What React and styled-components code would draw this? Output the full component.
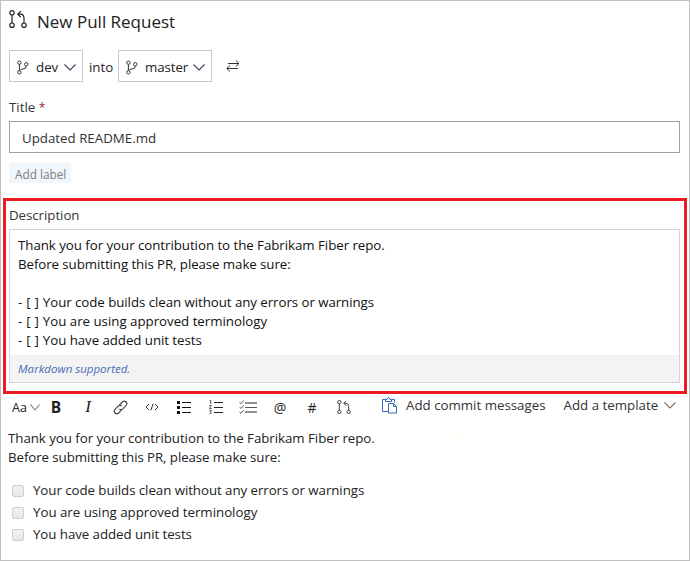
import React from "react";
import styled, { createGlobalStyle } from "styled-components";

const Global = createGlobalStyle`
  * { box-sizing: border-box; }
  html, body { margin: 0; background: #fff; }
  body { font-family: "Open Sans", "Noto Sans", sans-serif; font-size: 13.3px; color: #333; overflow: hidden; }
  h1, p, ul { margin: 0; padding: 0; font-weight: 400; }
  svg { display: block; flex: none; overflow: visible; }
`;

const Page = styled.main`
  width: 690px;
  height: 561px;
  border: 1px solid #c0c0c0;
  display: flex;
  flex-direction: column;
  position: relative;
`;
const Text = styled.span`
  white-space: pre;
  letter-spacing: ${(p) => p.$track || 0}px;
  margin-left: ${(p) => p.$left || 0}px;
`;
const Header = styled.header`
  display: flex;
  align-items: center;
  height: 40px;
  padding: 0 0 0 8px;
`;
const HeaderIcon = styled.span`
  margin-bottom: 4px;
`;
const Heading = styled.h1`
  font-size: 17px;
  line-height: 24px;
  margin-left: 10px;
  padding-top: 1px;
  white-space: nowrap;
  color: #222;
`;
const Branches = styled.div`
  display: flex;
  align-items: center;
  height: 32px;
  margin: 9px 0 0 8px;
  color: #222;
`;
const BranchButton = styled.button`
  display: flex;
  align-items: center;
  width: ${(p) => p.$width}px;
  height: 32px;
  padding: 2px 6px 0 7px;
  border: 1px solid #c8c8c8;
  background: #fff;
  font: inherit;
  color: inherit;
  & > svg:last-child { margin-left: auto; }
`;
const Into = styled.span`
  width: 35px;
  padding: 1px 0 0 6px;
`;
const Swap = styled.span`
  margin-left: 14px;
`;
const FieldLabel = styled.label`
  display: block;
  height: 20px;
  line-height: 20px;
  margin: ${(p) => p.$margin};
`;
const Required = styled.span`
  color: #a02038;
  font-size: 12px;
`;
const TitleInput = styled.div`
  margin: 4px 9px 0 8px;
  height: 32px;
  border: 1px solid #a0a0a0;
  padding-left: 12px;
  line-height: 32px;
`;
const LabelChip = styled.button`
  margin: 10px 0 0 8px;
  width: 62px;
  height: 20px;
  padding: 1px 0 0 6px;
  border: 0;
  background: #eff6fc;
  color: #808080;
  font: inherit;
  font-size: 11.8px;
  line-height: 20px;
  text-align: left;
`;
const Highlight = styled.section`
  margin: 15px 2px 0 2px;
  height: 196px;
  border: 3px solid #ed1c24;
`;
const Editor = styled.div`
  margin: 4px 4px 0 3px;
  height: 154px;
  border: 1px solid #d4d4d4;
  display: flex;
  flex-direction: column;
`;
const EditorBody = styled.div`
  flex: 1;
  padding: 6px 0 0 8px;
  color: #111;
`;
const Line = styled.p`
  height: 19px;
  line-height: 19px;
  white-space: pre;
  letter-spacing: ${(p) => p.$track || 0}px;
`;
const EditorFooter = styled.div`
  height: 27px;
  background: #f3f3f3;
  color: #4a6db5;
  font-size: 11.5px;
  font-style: italic;
  line-height: 27px;
  padding-left: 8px;
`;
const Toolbar = styled.div`
  display: flex;
  align-items: center;
  height: 26px;
`;
const Tool = styled.span`
  display: flex;
  align-items: center;
  justify-content: center;
  width: 32px;
  height: 26px;
  color: #222;
  font-size: 14px;
`;
const StyleTool = styled(Tool)`
  width: 28px;
  margin-left: 11px;
  justify-content: space-between;
  font-size: 12.5px;
`;
const BoldTool = styled(Tool)`
  font-weight: 700;
  font-size: 15.5px;
  padding-bottom: 1px;
`;
const ItalicTool = styled(Tool)`
  font-family: "Liberation Serif", serif;
  font-style: italic;
  font-size: 17px;
`;
const Action = styled.span`
  display: flex;
  align-items: center;
  height: 22px;
  margin: 0 0 4px ${(p) => p.$left}px;
  gap: ${(p) => p.$gap}px;
`;
const Preview = styled.div`
  padding: 9px 0 0 7px;
  color: #222;
`;
const Tasks = styled.ul`
  list-style: none;
  margin-top: 12px;
`;
const Task = styled.li`
  display: flex;
  align-items: center;
  height: 22px;
  line-height: 22px;
`;
const Box = styled.span`
  width: 12px;
  height: 12px;
  margin: 2px 9px 0 4px;
  border: 1px solid #cfcfcf;
  border-radius: 2px;
  background: linear-gradient(#f2f2f2, #e6e6e6);
`;
const Mark = styled.i`
  position: absolute;
  left: 455px;
  top: 433px;
  width: 1px;
  height: 6px;
  background: #ffffc8;
`;

const Chevron = ({ color = "#4a3a55", w = 12 }) => (
  <svg width={w} height="7" viewBox={`0 0 ${w} 7`} fill="none" stroke={color} strokeWidth="1.1">
    <path d={`M.5 .5L${w / 2} 6L${w - 0.5} .5`} />
  </svg>
);
const PullIcon = ({ w = 18, h = 18, color = "#222", sw = 1.2 }) => (
  <svg width={w} height={h} viewBox="0 0 18 18" fill="none" stroke={color} strokeWidth={sw}>
    <circle cx="3" cy="2.8" r="2.2" />
    <circle cx="3" cy="15.2" r="2.2" />
    <circle cx="15" cy="15.2" r="2.2" />
    <path d="M3 5V13M15 13V8.5Q15 4.2 11.5 4.2H8.8M11.8 1.2L8.8 4.2L11.8 7.2" />
  </svg>
);
const BranchIcon = () => (
  <svg width="12" height="15" viewBox="0 0 12 15" fill="none" stroke="#333" strokeWidth="1">
    <circle cx="2.4" cy="2.7" r="1.7" />
    <circle cx="2.4" cy="12.3" r="1.7" />
    <circle cx="9.3" cy="4.3" r="1.7" />
    <path d="M2.4 4.4V10.6M9.3 6Q9.3 9 6 9Q3.5 9 2.8 10.6" />
  </svg>
);
const SwapIcon = () => (
  <svg width="14" height="13" viewBox="0 0 14 13" fill="none" stroke="#333" strokeWidth="1">
    <path d="M2 3.5H13M9.8 .5L13 3.5L9.8 6.5M12 8.5H.8M4 5.5L.8 8.5L4 11.5" />
  </svg>
);
const LinkIcon = () => (
  <svg width="15" height="15" viewBox="0 0 15 15" fill="none" stroke="#444" strokeWidth="1.1">
    <path d="M6.3 5.2L9.4 2Q11.2 .2 13 2Q14.8 3.8 13 5.6L9.8 8.8Q8 10.4 6.3 8.8M8.7 6.2Q7 4.6 5.2 6.2L2 9.4Q.2 11.2 2 13Q3.8 14.8 5.6 13L8.7 9.8" />
  </svg>
);
const CodeIcon = () => (
  <svg width="14" height="8" viewBox="0 0 14 8" fill="none" stroke="#333" strokeWidth="1">
    <path d="M4 1L1 4L4 7M10 1L13 4L10 7M8.2 .6L5.8 7.4" />
  </svg>
);
const BulletIcon = () => (
  <svg width="14" height="13" viewBox="0 0 14 13" fill="#111">
    <path d="M0 0h3v3H0zM0 5h3v3H0zM0 10h3v3H0zM5 1h9v1H5zM5 6h9v1H5zM5 11h9v1H5z" />
  </svg>
);
const NumberIcon = () => (
  <svg width="14" height="14" viewBox="0 0 14 14" fill="none" stroke="#333" strokeWidth="1">
    <path d="M5 2.5H14M5 7.5H14M5 12.5H14" stroke="#222" />
    <path d="M.5 1L1.7 .3V4M.2 5.5H2.2L.5 8.5H2.6M.3 10.3H2.4L1.3 11.6Q3 12 2 13.3L.3 13.4" strokeWidth=".8" />
  </svg>
);
const CheckListIcon = () => (
  <svg width="18" height="14" viewBox="0 0 18 14" fill="none">
    <path d="M6 3H18M6 12H18" stroke="#909090" strokeWidth="2" />
    <path d="M6 7.5H18" stroke="#555" />
    <path d="M.5 2.3L2 3.7L4.7 .5M.5 7.1L2 8.5L4.7 5.3M.5 11.9L2 13.3L4.7 10.1" stroke="#555" />
  </svg>
);
const ClipboardIcon = () => (
  <svg width="15" height="17" viewBox="0 0 15 17" fill="none" stroke="#3567b8" strokeWidth="1">
    <path d="M6 14.5H.5V2.5H3.5M9.5 2.5H12.5V5.5M3.5 4.5V2.5H5Q5.2 .6 6.5 .6T8 2.5H9.5V4.5ZM6.5 6.5H11.5L14.5 9.5V16H6.5ZM11.5 6.5V9.5H14.5" />
  </svg>
);

const LINES = [
  ["Thank you for your contribution to the Fabrikam Fiber repo.", -0.045],
  ["Before submitting this PR, please make sure:", -0.08],
  ["", 0],
];
const TASKS = [
  ["Your code builds clean without any errors or warnings", -0.06],
  ["You are using approved terminology", -0.02],
  ["You have added unit tests", -0.06],
];

export default function App() {
  return (
    <Page>
      <Global />
      <Header>
        <HeaderIcon><PullIcon /></HeaderIcon>
        <Heading>New Pull Request</Heading>
      </Header>
      <Branches>
        <BranchButton $width={74}>
          <BranchIcon />
          <Text $left={7}>dev</Text>
          <Chevron />
        </BranchButton>
        <Into>into</Into>
        <BranchButton $width={94}>
          <BranchIcon />
          <Text $left={7} $track={-0.1}>master</Text>
          <Chevron />
        </BranchButton>
        <Swap><SwapIcon /></Swap>
      </Branches>
      <FieldLabel $margin="15px 0 0 8px">Title <Required>*</Required></FieldLabel>
      <TitleInput><Text>Updated README.md</Text></TitleInput>
      <LabelChip>Add label</LabelChip>
      <Highlight>
        <FieldLabel $margin="4px 0 0 3px"><Text $track={-0.05}>Description</Text></FieldLabel>
        <Editor>
          <EditorBody>
            {LINES.map(([line, track]) => <Line key={line} $track={track}>{line}</Line>)}
            {TASKS.map(([task, track]) => (
              <Line key={task}><Text $track={0.25}>- [ ] </Text><Text $track={track}>{task}</Text></Line>
            ))}
          </EditorBody>
          <EditorFooter><Text>Markdown supported.</Text></EditorFooter>
        </Editor>
      </Highlight>
      <Toolbar>
        <StyleTool><Text>Aa</Text><Chevron w={10} color="#8a7468" /></StyleTool>
        <BoldTool>B</BoldTool>
        <ItalicTool>I</ItalicTool>
        <Tool><LinkIcon /></Tool>
        <Tool><CodeIcon /></Tool>
        <Tool><BulletIcon /></Tool>
        <Tool><NumberIcon /></Tool>
        <Tool><CheckListIcon /></Tool>
        <Tool>@</Tool>
        <Tool>#</Tool>
        <Tool><PullIcon w={14} h={14} color="#333" /></Tool>
        <Action $left={22} $gap={9}><ClipboardIcon /><Text>Add commit messages</Text></Action>
        <Action $left={18} $gap={6}><Text>Add a template</Text><Chevron color="#8a6a5c" /></Action>
      </Toolbar>
      <Preview>
        {LINES.slice(0, 2).map(([line, track]) => <Line key={line} $track={track}>{line}</Line>)}
        <Tasks>
          {TASKS.map(([task, track]) => (
            <Task key={task}><Box /><Text $track={track}>{task}</Text></Task>
          ))}
        </Tasks>
      </Preview>
      <Mark />
    </Page>
  );
}
